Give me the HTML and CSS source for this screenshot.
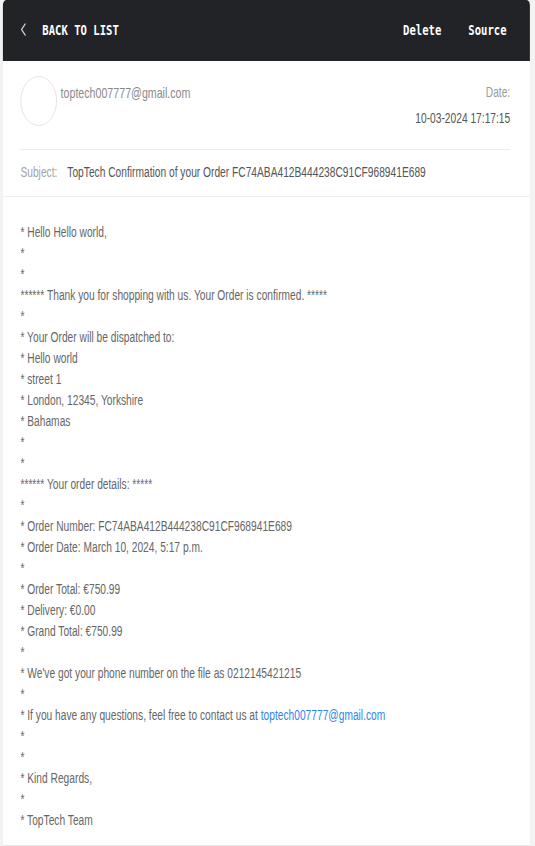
FILE: index.html
```html
<!DOCTYPE html>
<html lang="en">
<head>
<meta charset="utf-8">
<title>Message</title>
<link rel="stylesheet" href="styles.css">
</head>
<body>
<div class="viewport">
<div class="page">
  <div class="card">
    <header class="topbar">
      <a class="back">
        <svg class="chev" width="8" height="13" viewBox="0 0 8 13"><polyline points="6.5,1 1.5,6.5 6.5,12" fill="none" stroke="#cfcfd2" stroke-width="1.6" stroke-linecap="round" stroke-linejoin="round"/></svg>
        <span>BACK TO LIST</span>
      </a>
      <nav class="actions">
        <a>Delete</a>
        <a>Source</a>
      </nav>
    </header>

    <section class="meta">
      <div class="info-row">
        <div class="sender">
          <div class="avatar"></div>
          <div class="email">toptech007777@gmail.com</div>
        </div>
        <div class="date-col">
          <div class="date-label">Date:</div>
          <div class="date-value">10-03-2024 17:17:15</div>
        </div>
      </div>
      <div class="subject">
        <span class="subject-label">Subject:</span>
        <span class="subject-text">TopTech Confirmation of your Order FC74ABA412B444238C91CF968941E689</span>
      </div>
    </section>

    <section class="message">
      <p>* Hello Hello world,</p>
      <p>*</p>
      <p>*</p>
      <p>****** Thank you for shopping with us. Your Order is confirmed. *****</p>
      <p>*</p>
      <p>* Your Order will be dispatched to:</p>
      <p>* Hello world</p>
      <p>* street 1</p>
      <p>* London, 12345, Yorkshire</p>
      <p>* Bahamas</p>
      <p>*</p>
      <p>*</p>
      <p>****** Your order details: *****</p>
      <p>*</p>
      <p>* Order Number: FC74ABA412B444238C91CF968941E689</p>
      <p>* Order Date: March 10, 2024, 5:17 p.m.</p>
      <p>*</p>
      <p>* Order Total: €750.99</p>
      <p>* Delivery: €0.00</p>
      <p>* Grand Total: €750.99</p>
      <p>*</p>
      <p>* We've got your phone number on the file as 0212145421215</p>
      <p>*</p>
      <p>* If you have any questions, feel free to contact us at <a class="link">toptech007777@gmail.com</a></p>
      <p>*</p>
      <p>*</p>
      <p>* Kind Regards,</p>
      <p>*</p>
      <p>* TopTech Team</p>
    </section>
  </div>
</div>
</div>
</body>
</html>
```
FILE: styles.css
```css
html, body {
  margin: 0;
  padding: 0;
  overflow: hidden;
  background: #f3f3f4;
}

body {
  font-family: "Liberation Sans", Arial, sans-serif;
  font-size: 14px;
  color: #666;
}

.viewport {
  width: 535px;
  height: 846px;
  overflow: hidden;
}

.page {
  width: 733px;
  transform: scaleX(0.7299);
  transform-origin: 0 0;
}

.card {
  margin-left: 3px;
  width: 724px;
  box-sizing: border-box;
  background: #fff;
  border: 1px solid #e6e6e8;
  border-top: none;
  border-radius: 5px 5px 0 0;
  min-height: 846px;
}

.topbar {
  height: 61px;
  background: #222327;
  border-radius: 5px 5px 0 0;
  display: flex;
  align-items: center;
  justify-content: space-between;
  padding: 0 32px 2px 24px;
  box-sizing: border-box;
  font-family: "DejaVu Sans Mono", monospace;
  font-weight: bold;
  font-size: 14.5px;
  color: #fff;
}

.back {
  display: flex;
  align-items: center;
  gap: 22px;
}

.chev {
  display: block;
}

.actions {
  display: flex;
  gap: 37px;
}

.meta {
  padding: 15px 27px 0 24px;
  border-bottom: 1px solid #ededef;
}

.info-row {
  display: flex;
  justify-content: space-between;
  align-items: flex-start;
  height: 74px;
  box-sizing: border-box;
  border-bottom: 1px solid #ededef;
}

.sender {
  display: flex;
  align-items: flex-start;
  gap: 5px;
}

.avatar {
  width: 48px;
  height: 48px;
  border: 1px solid #e0e0e2;
  border-radius: 50%;
}

.email {
  margin-top: 7px;
  line-height: 21px;
  font-size: 14.6px;
  color: #8a8a8a;
}

.date-col {
  text-align: right;
  padding-top: 6px;
  line-height: 21px;
}

.date-label {
  color: #9a9a9a;
}

.date-value {
  margin-top: 5px;
  color: #555;
}

.subject {
  padding: 12px 0 13px;
  line-height: 21px;
}

.subject-label {
  color: #a3a3a6;
  margin-right: 10px;
}

.subject-text {
  color: #555;
}

.message {
  padding: 25px 27px 0 24px;
  line-height: 21px;
  color: #666;
}

.message p {
  margin: 0;
}

.link {
  color: #2f86eb;
}
```
